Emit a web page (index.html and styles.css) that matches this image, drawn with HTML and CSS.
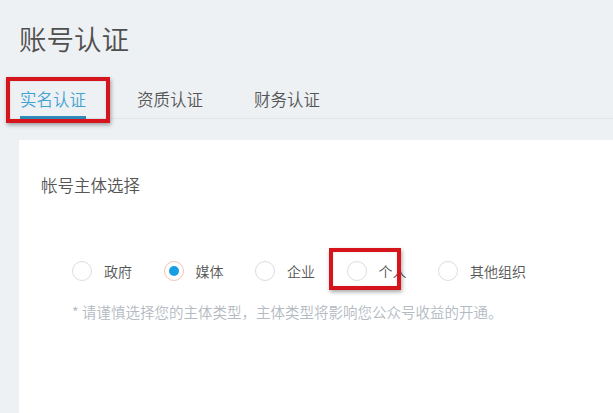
FILE: index.html
```html
<!DOCTYPE html>
<html lang="zh-CN">
<head>
<meta charset="utf-8">
<title>账号认证</title>
<link rel="stylesheet" href="styles.css">
</head>
<body>
<div class="page">
  <header class="header">
    <h1 class="title">账号认证</h1>
    <nav class="tabs">
      <span class="tab active">实名认证</span>
      <span class="tab">资质认证</span>
      <span class="tab">财务认证</span>
    </nav>
    <div class="mark mark-tab"></div>
  </header>
  <main class="card">
    <div class="label">帐号主体选择</div>
    <div class="radios">
      <label class="radio"><span class="dot"></span><span class="text">政府</span></label>
      <label class="radio checked"><span class="dot"></span><span class="text">媒体</span></label>
      <label class="radio"><span class="dot"></span><span class="text">企业</span></label>
      <label class="radio"><span class="dot"></span><span class="text">个人</span></label>
      <label class="radio"><span class="dot"></span><span class="text">其他组织</span></label>
      <div class="mark mark-radio"></div>
    </div>
    <p class="hint">* 请谨慎选择您的主体类型，主体类型将影响您公众号收益的开通。</p>
  </main>
</div>
</body>
</html>
```

FILE: styles.css
```css
html, body {
  margin: 0;
  padding: 0;
  height: 100%;
}
body {
  background: #eef1f4;
  font-family: "Noto Sans CJK SC", "Noto Sans", sans-serif;
  font-weight: 350;
  color: #555;
  overflow: hidden;
}
.page {
  display: flex;
  flex-direction: column;
  height: 100%;
}
.header {
  position: relative;
  padding-left: 20px;
}
.title {
  margin: 18px 0 0 -1px;
  font-size: 27.5px;
  line-height: 40px;
  font-weight: 350;
  color: #4f4f4f;
}
.tabs {
  display: flex;
  gap: 51px;
  margin-top: 29px;
  border-bottom: 1px solid #e2e6ea;
}
.tab {
  font-size: 16.5px;
  line-height: 24px;
  padding-bottom: 5px;
  border-bottom: 3px solid transparent;
  margin-bottom: -1px;
  color: #555;
}
.tab.active {
  color: #42a2d2;
  border-bottom-color: #2f8cbd;
}
.mark {
  position: absolute;
  border: 4px solid #d5141c;
  box-shadow: 1px 2px 4px rgba(0, 0, 0, 0.35), inset 0 0 2px rgba(0, 0, 0, 0.15);
  box-sizing: border-box;
  pointer-events: none;
}
.mark-tab {
  left: 6px;
  top: 77px;
  width: 104px;
  height: 46px;
}
.card {
  flex: 1;
  margin: 21px 0 0 19px;
  background: #fff;
  padding: 33px 0 0 22px;
}
.label {
  font-size: 16.5px;
  line-height: 24px;
  color: #555;
}
.radios {
  position: relative;
  display: flex;
  align-items: center;
  gap: 31.5px;
  margin: 64px 0 0 31px;
  height: 20px;
}
.radio {
  display: flex;
  align-items: center;
  gap: 12px;
  font-size: 14px;
  color: #555;
}
.dot {
  width: 20px;
  height: 20px;
  box-sizing: border-box;
  border: 1px solid #d9dde2;
  border-radius: 50%;
  display: flex;
  align-items: center;
  justify-content: center;
}
.radio.checked .dot {
  border-color: #f2c4bb;
}
.radio.checked .dot::after {
  content: "";
  width: 10px;
  height: 10px;
  border-radius: 50%;
  background: #1a9ee3;
}
.mark-radio {
  left: 257px;
  top: -13px;
  width: 72px;
  height: 42px;
}
.hint {
  margin: 21px 0 0 31px;
  font-size: 14.5px;
  line-height: 20px;
  color: #b3bac2;
}
```
